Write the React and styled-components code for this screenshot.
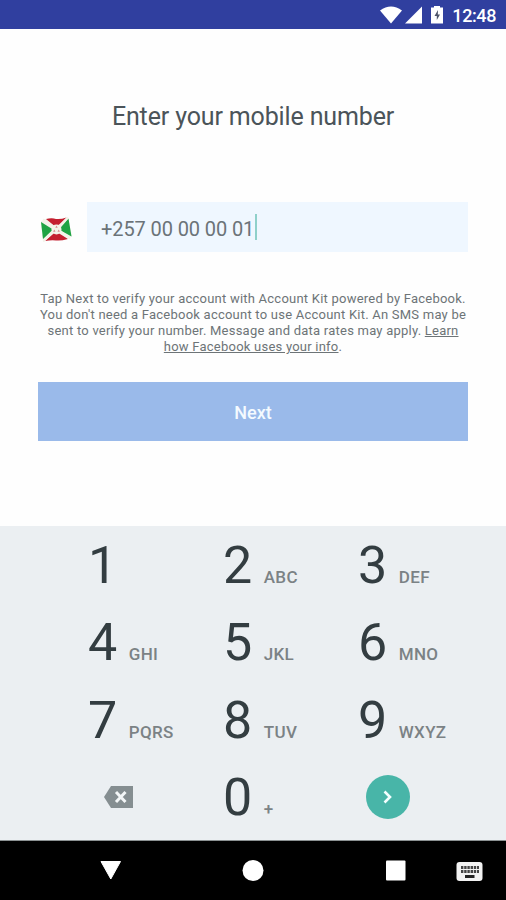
import React, { useState } from 'react';
import styled, { createGlobalStyle } from 'styled-components';

const GlobalStyle = createGlobalStyle`
  * {
    box-sizing: border-box;
  }

  body {
    margin: 0;
    font-family: Roboto, "Liberation Sans", sans-serif;
  }
`;

const Screen = styled.div`
  display: flex;
  flex-direction: column;
  width: 506px;
  height: 900px;
  overflow: hidden;
  background-color: #fefefe;
`;

const StatusBar = styled.header`
  display: flex;
  align-items: center;
  justify-content: flex-end;
  height: 29px;
  padding: 1px 10px 0 0;
  background-color: #303f9f;
  color: #ffffff;
`;

const StatusIcons = styled.svg`
  display: block;
  margin-right: 8px;
`;

const Clock = styled.span`
  font-size: 18px;
  font-weight: 500;
  line-height: 27px;
  letter-spacing: -0.4px;
`;

const Content = styled.main`
  display: flex;
  flex-direction: column;
  height: 497px;
  padding: 71px 38px 0;
`;

const Title = styled.h1`
  margin: 0;
  color: #4b5459;
  font-size: 25px;
  font-weight: 400;
  line-height: 33px;
  text-align: center;
  letter-spacing: -0.14px;
`;

const PhoneRow = styled.div`
  display: flex;
  align-items: center;
  height: 50px;
  margin-top: 69px;
`;

const Flag = styled.svg`
  flex: none;
  display: block;
  margin: 5px 15px 0 2px;
`;

const PhoneField = styled.div`
  display: flex;
  flex: 1;
  align-items: center;
  height: 50px;
  padding: 3px 14px 0;
  background-color: #eff7ff;
  color: #6b7378;
  font-size: 20px;
  letter-spacing: -0.1px;
  white-space: pre;
`;

const Cursor = styled.span`
  width: 2px;
  height: 26px;
  margin: -3px 0 0 1px;
  background-color: #8fd0ca;
`;

const Note = styled.p`
  margin: 39px -5px 0;
  color: #6d7477;
  font-size: 13px;
  line-height: 16px;
  text-align: center;
  letter-spacing: 0.23px;
  white-space: nowrap;
`;

const NextButton = styled.button`
  height: 59px;
  margin-top: 27px;
  padding: 2px 0 0;
  border: none;
  background-color: #9abaea;
  color: #f4faff;
  font-family: inherit;
  font-size: 18px;
  font-weight: 500;
`;

const Keypad = styled.section`
  display: grid;
  grid-template-columns: repeat(3, 135px);
  grid-template-rows: repeat(4, 77.3px);
  height: 315px;
  padding: 1px 0 0 88px;
  border-bottom: 1px solid #8b9192;
  background-color: #ebeff2;
`;

const Key = styled.div`
  display: flex;
  align-items: baseline;
  gap: 11.5px;
  padding-top: 8px;
`;

const IconKey = styled.div`
  display: flex;
  align-items: center;
  padding: 0 0 2px ${(props) => props.$offset}px;
`;

const Digit = styled.span`
  color: #333d41;
  font-size: 52px;
  font-weight: 400;
  line-height: 61px;
`;

const Letters = styled.span`
  color: #7b8285;
  font-size: 17px;
  font-weight: 500;
  letter-spacing: 0.35px;
`;

const GoButton = styled.div`
  display: flex;
  align-items: center;
  justify-content: center;
  width: 44px;
  height: 44px;
  border-radius: 50%;
  background-color: #48b5a8;
`;

const NavBar = styled.nav`
  height: 59px;
  background-color: #000000;
`;

const keys = [
  { digit: '1', letters: '' },
  { digit: '2', letters: 'ABC' },
  { digit: '3', letters: 'DEF' },
  { digit: '4', letters: 'GHI' },
  { digit: '5', letters: 'JKL' },
  { digit: '6', letters: 'MNO' },
  { digit: '7', letters: 'PQRS' },
  { digit: '8', letters: 'TUV' },
  { digit: '9', letters: 'WXYZ' },
];

const BurundiFlag = () => (
  <Flag width="32" height="28" viewBox="0 0 32 28">
    <path d="M1 5 Q9 1 15 3 Q22 4 28 1 L32 20 Q24 25 17 24 Q9 23 3 26 Z" fill="#f3f3ea" />
    <path d="M6 3 Q12 1.500 16 3 Q21 3.500 26.500 1.500 L17 12 Z" fill="#c41f30" />
    <path d="M5 25 L16 15.500 L28 23 Q21 25 16 24.500 Q11 24 5 25 Z" fill="#c41f30" />
    <path d="M1 6 L13 13.500 L3 23 Z" fill="#1fa344" />
    <path d="M28.500 2.500 L19 13.500 L31.500 20.500 Z" fill="#1fa344" />
    <path d="M3 3.500 L30 22.500 M28 1.500 L3.500 25" stroke="#f3f3ea" strokeWidth="2.200" />
    <circle cx="16.500" cy="13.500" r="5" fill="#f3f3ea" />
    <path d="M16.500 9.500 l1.200 2.200 h-2.400 z M14.300 13.500 l1.200 2.200 h-2.400 z M18.700 13.500 l1.200 2.200 h-2.400 z" fill="#d98a90" />
  </Flag>
);

const App = () => {
  const [phone] = useState('+257 00 00 00 01');

  return (
    <Screen>
      <GlobalStyle />
      <StatusBar>
        <StatusIcons width="64" height="22" viewBox="0 0 64 22">
          <path d="M0 6.500 Q11 -1.500 22 6.500 L11 19.500 Z" fill="#fff" />
          <path d="M42 2.500 V19.500 H25 Z" fill="#fff" />
          <path d="M51 3.500 H54 V2 H60 V3.500 H63 V19.500 H51 Z" fill="#fff" />
          <path d="M58 6 L54.500 12 H56.800 V16 L60 10.500 H57.800 Z" fill="#4d5468" />
        </StatusIcons>
        <Clock>12:48</Clock>
      </StatusBar>

      <Content>
        <Title>Enter your mobile number</Title>
        <PhoneRow>
          <BurundiFlag />
          <PhoneField>
            {phone}
            <Cursor />
          </PhoneField>
        </PhoneRow>
        <Note>
          Tap Next to verify your account with Account Kit powered by Facebook.
          <br />
          You don't need a Facebook account to use Account Kit. An SMS may be
          <br />
          sent to verify your number. Message and data rates may apply. <u>Learn</u>
          <br />
          <u>how Facebook uses your info</u>.
        </Note>
        <NextButton>Next</NextButton>
      </Content>

      <Keypad>
        {keys.map((key) => (
          <Key key={key.digit}>
            <Digit>{key.digit}</Digit>
            {key.letters && <Letters>{key.letters}</Letters>}
          </Key>
        ))}
        <IconKey $offset={15}>
          <svg width="31" height="24" viewBox="0 0 31 24">
            <path d="M8 1 H30 V23 H8 L1 12 Z" fill="#858e91" />
            <path d="M13 7 L22.500 17 M22.500 7 L13 17" stroke="#f3f6f7" strokeWidth="3" />
          </svg>
        </IconKey>
        <Key>
          <Digit>0</Digit>
          <Letters>+</Letters>
        </Key>
        <IconKey $offset={8}>
          <GoButton>
            <svg width="12" height="16" viewBox="0 0 12 16">
              <path d="M2.500 2.500 L8 8 L2.500 13.500" fill="none" stroke="#f4ffff" strokeWidth="2.600" />
            </svg>
          </GoButton>
        </IconKey>
      </Keypad>

      <NavBar>
        <svg width="506" height="59" viewBox="0 0 506 59">
          <path d="M101 20.500 H120.500 L110.800 38 Z" fill="#fff" stroke="#fff" strokeLinejoin="round" />
          <circle cx="253" cy="29.500" r="10.500" fill="#fff" />
          <rect x="386" y="19.500" width="19.500" height="20" rx="1" fill="#fff" />
          <rect x="456.500" y="21" width="26" height="19" rx="3" fill="#f2f2f2" />
          <path d="M461 26.500 H479 M461 30.500 H479" stroke="#444" strokeWidth="3" strokeDasharray="2.400 0.800" />
          <path d="M465 35.500 H474.500" stroke="#222" strokeWidth="3" />
        </svg>
      </NavBar>
    </Screen>
  );
};

export default App;
